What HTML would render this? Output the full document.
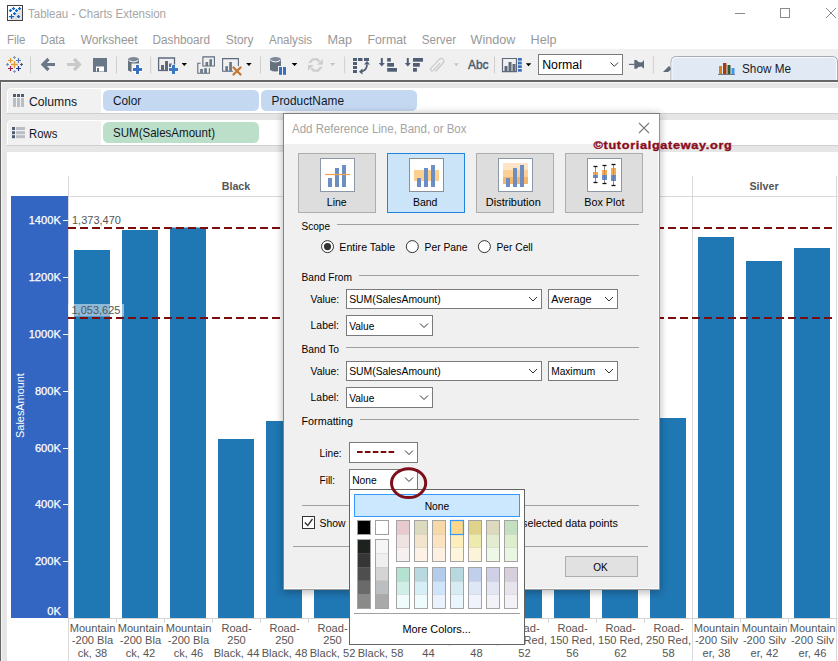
<!DOCTYPE html><html><head><meta charset="utf-8"><style>html,body{margin:0;padding:0;background:#fff;overflow:hidden}svg{display:block}text{font-family:"Liberation Sans",sans-serif}</style></head><body>
<svg width="838" height="661" viewBox="0 0 838 661">
<defs><linearGradient id="shL" x1="1" x2="0" y1="0" y2="0"><stop offset="0" stop-color="#000" stop-opacity="0.16"/><stop offset="1" stop-color="#000" stop-opacity="0"/></linearGradient><linearGradient id="shR" x1="0" x2="1" y1="0" y2="0"><stop offset="0" stop-color="#000" stop-opacity="0.16"/><stop offset="1" stop-color="#000" stop-opacity="0"/></linearGradient><linearGradient id="shB" x1="0" x2="0" y1="0" y2="1"><stop offset="0" stop-color="#000" stop-opacity="0.14"/><stop offset="1" stop-color="#000" stop-opacity="0"/></linearGradient><filter id="blur" x="-20%" y="-20%" width="140%" height="140%"><feGaussianBlur stdDeviation="4"/></filter><linearGradient id="bR" x1="0" x2="0" y1="0" y2="1"><stop offset="0" stop-color="#858585"/><stop offset="1" stop-color="#d8d8d8"/></linearGradient></defs>
<rect x="0" y="0" width="838" height="49" fill="#ffffff" />
<rect x="7" y="5" width="16" height="16" fill="#424242" />
<rect x="8" y="6" width="14" height="14" fill="#ffffff" />
<path d="M22 8 L22 20 L9 20 Z" fill="#e2e2e2"/>
<path d="M8.9 10.5H12.1M10.5 8.9V12.1" stroke="#1565c0" stroke-width="1.25" fill="none"/>
<path d="M11.9 8.5H15.1M13.5 6.9V10.1" stroke="#1565c0" stroke-width="1.25" fill="none"/>
<path d="M17.9 8.5H21.1M19.5 6.9V10.1" stroke="#1565c0" stroke-width="1.25" fill="none"/>
<path d="M14.9 10.5H18.1M16.5 8.9V12.1" stroke="#1565c0" stroke-width="1.25" fill="none"/>
<path d="M12.9 13.5H16.1M14.5 11.9V15.1" stroke="#1565c0" stroke-width="1.25" fill="none"/>
<path d="M8.9 16.5H14.1M11.5 13.9V19.1" stroke="#1565c0" stroke-width="1.25" fill="none"/>
<path d="M16.9 16.5H20.1M18.5 14.9V18.1" stroke="#1565c0" stroke-width="1.25" fill="none"/>
<text x="28" y="18" font-size="12.3" fill="#a6a6a6" textLength="138" lengthAdjust="spacingAndGlyphs" >Tableau - Charts Extension</text>
<line x1="735" y1="13.5" x2="745" y2="13.5" stroke="#8a8a8a" stroke-width="1" />
<rect x="780.5" y="8.5" width="9" height="9" fill="none" stroke="#8a8a8a" stroke-width="1" />
<path d="M826 8L836 18M836 8L826 18" stroke="#8a8a8a" stroke-width="1"/>
<text x="6.9" y="43.5" font-size="12.3" fill="#989898" textLength="18.6" lengthAdjust="spacingAndGlyphs" >File</text>
<text x="40.6" y="43.5" font-size="12.3" fill="#989898" textLength="24.4" lengthAdjust="spacingAndGlyphs" >Data</text>
<text x="80.7" y="43.5" font-size="12.3" fill="#989898" textLength="56.8" lengthAdjust="spacingAndGlyphs" >Worksheet</text>
<text x="152.5" y="43.5" font-size="12.3" fill="#989898" textLength="57.5" lengthAdjust="spacingAndGlyphs" >Dashboard</text>
<text x="225.7" y="43.5" font-size="12.3" fill="#989898" textLength="27.8" lengthAdjust="spacingAndGlyphs" >Story</text>
<text x="269.0" y="43.5" font-size="12.3" fill="#989898" textLength="43.0" lengthAdjust="spacingAndGlyphs" >Analysis</text>
<text x="327.5" y="43.5" font-size="12.3" fill="#989898" textLength="24.6" lengthAdjust="spacingAndGlyphs" >Map</text>
<text x="367.5" y="43.5" font-size="12.3" fill="#989898" textLength="38.9" lengthAdjust="spacingAndGlyphs" >Format</text>
<text x="421.8" y="43.5" font-size="12.3" fill="#989898" textLength="34.2" lengthAdjust="spacingAndGlyphs" >Server</text>
<text x="470.6" y="43.5" font-size="12.3" fill="#989898" textLength="44.9" lengthAdjust="spacingAndGlyphs" >Window</text>
<text x="530.6" y="43.5" font-size="12.3" fill="#989898" textLength="25.9" lengthAdjust="spacingAndGlyphs" >Help</text>
<rect x="0" y="49" width="838" height="31" fill="#f0f0f0" />
<rect x="0" y="80" width="838" height="2" fill="#666666" />
<path d="M11.0 64.5H18.0M14.5 61.0V68.0" stroke="#e5992f" stroke-width="1.3" fill="none"/>
<path d="M8.0 60.5H13.0M10.5 58.0V63.0" stroke="#e5992f" stroke-width="1.2" fill="none"/>
<path d="M16.0 60.5H21.0M18.5 58.0V63.0" stroke="#4f7bbf" stroke-width="1.2" fill="none"/>
<path d="M8.0 68.5H13.0M10.5 66.0V71.0" stroke="#a3224d" stroke-width="1.2" fill="none"/>
<path d="M16.0 68.5H21.0M18.5 66.0V71.0" stroke="#1e3c8f" stroke-width="1.2" fill="none"/>
<path d="M13.0 57.5H16.0M14.5 56.0V59.0" stroke="#8d9ba6" stroke-width="1.1" fill="none"/>
<path d="M6.0 64.5H9.0M7.5 63.0V66.0" stroke="#7b8bb8" stroke-width="1.1" fill="none"/>
<path d="M20.0 64.5H23.0M21.5 63.0V66.0" stroke="#4b5a88" stroke-width="1.1" fill="none"/>
<path d="M13.0 71.5H16.0M14.5 70.0V73.0" stroke="#8a9ac2" stroke-width="1.1" fill="none"/>
<line x1="30.5" y1="56.5" x2="30.5" y2="73.5" stroke="#cfcfcf" stroke-width="1" />
<path d="M43 64.5H55M48.5 59L43 64.5L48.5 70" stroke="#6b7889" stroke-width="3.2" fill="none" stroke-linejoin="miter"/>
<path d="M79.5 64.5H67M74 59L79.5 64.5L74 70" stroke="#c9c9c9" stroke-width="3.2" fill="none"/>
<rect x="93" y="58" width="14" height="14" fill="#687687" />
<rect x="96" y="66.5" width="8" height="5" fill="#ffffff" />
<rect x="97" y="68" width="2" height="4" fill="#687687" />
<line x1="116.5" y1="56.5" x2="116.5" y2="73.5" stroke="#cfcfcf" stroke-width="1" />
<path d="M128 59.5V70.5Q133.5 73.5 139 70.5V59.5Z" fill="#67727f"/>
<ellipse cx="133.5" cy="59.5" rx="5.5" ry="2.5" fill="#7d8998"/>
<path d="M128.6 60.3Q133.5 63.6 138.4 60.3" stroke="#ffffff" stroke-width="1" fill="none"/>
<rect x="131.5" y="63.5" width="11" height="11" fill="#f0f0f0" />
<path d="M133 69.5H142M137.5 65V74" stroke="#ffffff" stroke-width="5"/>
<path d="M133 69.5H142M137.5 65V74" stroke="#3b70c0" stroke-width="3"/>
<line x1="150.7" y1="56.5" x2="150.7" y2="73.5" stroke="#cfcfcf" stroke-width="1" />
<path d="M158.6 71V58H174.5V66" stroke="#5e6a7b" stroke-width="1.3" fill="none"/>
<path d="M158.6 70.5H168" stroke="#5e6a7b" stroke-width="1.3" fill="none"/>
<rect x="161" y="65" width="3" height="5" fill="#5e6a7b" />
<rect x="165" y="61" width="3" height="9" fill="#5e6a7b" />
<rect x="169" y="63.5" width="3" height="6.5" fill="#5e6a7b" />
<path d="M168.5 69.5H178.5M173.5 64.5V74.5" stroke="#f0f0f0" stroke-width="5"/>
<path d="M169 69.5H178M173.5 65V74" stroke="#3b78c6" stroke-width="3"/>
<path d="M181.6 63H187L184.3 66Z" fill="#000"/>
<path d="M202.9 56.9H214.4V66H202.9Z" stroke="#5e6a7b" stroke-width="1.1" fill="none"/>
<rect x="205.5" y="62" width="2.6" height="4" fill="#6a7888" />
<rect x="209.4" y="59.2" width="2.6" height="6.8" fill="#6a7888" />
<path d="M200.6 63.3H197.8V73.2H209.4V68.2" stroke="#5e6a7b" stroke-width="1.1" fill="none"/>
<rect x="200.2" y="69" width="2.7" height="4" fill="#6a7888" />
<rect x="204.2" y="68.2" width="2.7" height="4.8" fill="#6a7888" />
<path d="M233 71.2H222.6V58.6H238.4V66" stroke="#5e6a7b" stroke-width="1.1" fill="none"/>
<rect x="225.3" y="66.2" width="2.7" height="5" fill="#6a7888" />
<rect x="229.2" y="62" width="2.7" height="9.2" fill="#6a7888" />
<path d="M233.5 67.5L240.5 74.5M240.5 67.5L233.5 74.5" stroke="#c27a34" stroke-width="2.4" stroke-linecap="round"/>
<path d="M246.2 63H251.6L248.89999999999998 66Z" fill="#000"/>
<line x1="260.5" y1="56.5" x2="260.5" y2="73.5" stroke="#cfcfcf" stroke-width="1" />
<path d="M270 59.5V70.0Q275.5 73.0 281 70.0V59.5Z" fill="#67727f"/>
<ellipse cx="275.5" cy="59.5" rx="5.5" ry="2.5" fill="#7d8998"/>
<path d="M270.6 60.3Q275.5 63.6 280.4 60.3" stroke="#ffffff" stroke-width="1" fill="none"/>
<rect x="278" y="66" width="9" height="10" fill="#f0f0f0" />
<rect x="279" y="67" width="3" height="7.8" fill="#3b70c0" />
<rect x="283" y="67" width="3" height="7.8" fill="#3b70c0" />
<path d="M291.7 63H297.4L294.54999999999995 66Z" fill="#000"/>
<path d="M308 62.7L312.3 58.2H317.7L320.2 60.8L318.4 62.4L316.8 60.4H313.2L310.8 62.9Z M317 64.7H322.8V59Z" fill="#cdcdcd"/>
<path d="M322.8 67L318.5 71.8H313L310.6 69.2L312.3 67.6L313.9 69.6H317.5L320 66.8Z M308 65H313.8L308 70.8Z" fill="#cdcdcd"/>
<path d="M330 63H335.2L332.6 66Z" fill="#c4c4c4"/>
<line x1="344.7" y1="56.5" x2="344.7" y2="73.5" stroke="#cfcfcf" stroke-width="1" />
<rect x="353" y="58" width="4" height="3" fill="#4f5e74" />
<rect x="358" y="58" width="4.5" height="3" fill="#4f5e74" />
<rect x="364" y="58" width="5" height="3" fill="#4f5e74" />
<rect x="353" y="62" width="4" height="3" fill="#4f5e74" />
<rect x="353" y="66" width="4" height="3" fill="#4f5e74" />
<rect x="353" y="70" width="4" height="3" fill="#4f5e74" />
<path d="M361.5 71.5Q367 70 367 64.5" stroke="#4f5e74" stroke-width="1.8" fill="none"/>
<path d="M364 64.5L367 61L370 64.5Z M362.5 68.5L359 71.8L362.5 74.5Z" fill="#4f5e74"/>
<path d="M381.8 58V64" stroke="#4f5e74" stroke-width="2"/>
<path d="M378.8 63L384.8 63L381.8 66.5Z" fill="#4f5e74"/>
<rect x="387.2" y="58" width="3.6" height="3.6" fill="#4f5e74" />
<rect x="387.2" y="63" width="6.8" height="3.7" fill="#4f5e74" />
<rect x="387.2" y="68" width="9.8" height="3.7" fill="#4f5e74" />
<path d="M407.8 58V64" stroke="#4f5e74" stroke-width="2"/>
<path d="M404.8 63L410.8 63L407.8 66.5Z" fill="#4f5e74"/>
<rect x="413" y="58" width="10" height="3.7" fill="#4f5e74" />
<rect x="413" y="63" width="6.8" height="3.7" fill="#4f5e74" />
<rect x="413" y="68" width="3.9" height="3.7" fill="#4f5e74" />
<path d="M437 71.5L444.5 63A2.6 2.6 0 0 0 440.8 59.3L432.5 68.2A1.6 1.6 0 0 0 434.8 70.5L441.5 63.2" stroke="#c9c9c9" stroke-width="1.2" fill="none" transform="translate(-1.5,0)"/>
<path d="M453.8 63.2H458.8L456.3 66.2Z" fill="#c4c4c4"/>
<text x="468" y="68.8" font-size="12.6" fill="#4d5a70" textLength="20.5" lengthAdjust="spacingAndGlyphs" stroke="#4d5a70" stroke-width="0.45">Abc</text>
<line x1="494.5" y1="56.5" x2="494.5" y2="73.5" stroke="#cfcfcf" stroke-width="1" />
<path d="M502.5 71.6V58.5H516.5V71.6Z" stroke="#5e6a7b" stroke-width="1.2" fill="none"/>
<rect x="504.5" y="66" width="3" height="5.5" fill="#5e6a7b" />
<rect x="508.5" y="62" width="3" height="9.5" fill="#5e6a7b" />
<rect x="512.5" y="64" width="3" height="7.5" fill="#5e6a7b" />
<rect x="518" y="58" width="3.8" height="2.7" fill="#3b70c0" />
<rect x="518" y="61.7" width="3.8" height="2.7" fill="#3b70c0" />
<rect x="518" y="65.3" width="3.8" height="2.7" fill="#3b70c0" />
<rect x="518" y="69" width="3.8" height="2.7" fill="#3b70c0" />
<path d="M525.8 63.2H531.3L528.55 66.2Z" fill="#000"/>
<rect x="538.5" y="54.5" width="84" height="20" fill="#ffffff" stroke="#7a7a7a" stroke-width="1" />
<text x="542.2" y="69" font-size="12.3" fill="#000000" textLength="39.8" lengthAdjust="spacingAndGlyphs" >Normal</text>
<path d="M610.5 62.5L614.3 66.3L618.1 62.5" stroke="#333" stroke-width="1" fill="none"/>
<line x1="629" y1="64.4" x2="634.5" y2="64.4" stroke="#5e6a7b" stroke-width="1.2" />
<path d="M634.3 60H636.5Q638 62.5 641.5 62.5Q642.5 61.5 644 60V68.7Q642.5 67.3 641.5 66.5Q638 66.5 636.5 68.7H634.3Z" fill="#5e6a7b"/>
<line x1="653.4" y1="56.3" x2="653.4" y2="73.7" stroke="#cfcfcf" stroke-width="1" />
<path d="M663 72L669 66L672 69L668 72Z" fill="#5e6a7b"/>
<path d="M671 82V62Q671 56.5 676.5 56.5H832Q837.5 56.5 837.5 62V82Z" fill="#e1eaf4" stroke="#a4aab2" stroke-width="1"/>
<path d="M672 80V62.5Q672 57.5 677 57.5H831.5Q836.5 57.5 836.5 62.5V80" fill="none" stroke="#ffffff" stroke-width="1" stroke-opacity="0.8"/>
<rect x="719" y="66" width="3" height="8" fill="#d2821e" />
<rect x="723" y="63" width="3.5" height="11" fill="#a63a12" />
<rect x="727.5" y="65" width="3" height="9" fill="#2c5a30" />
<rect x="731.5" y="68" width="3" height="6" fill="#3d96f0" />
<line x1="718" y1="74.5" x2="735" y2="74.5" stroke="#6c7a88" stroke-width="1" />
<text x="742" y="72.8" font-size="12.8" fill="#1a1a2a" textLength="49" lengthAdjust="spacingAndGlyphs" >Show Me</text>
<rect x="0" y="80" width="838" height="2" fill="#666666" />
<rect x="0" y="82" width="838" height="579" fill="#e6e6e6" />
<rect x="0" y="82" width="1" height="579" fill="#666666" />
<rect x="1" y="82" width="838" height="1" fill="#f8f8f8" />
<rect x="1" y="83" width="1" height="578" fill="#f4f4f4" />
<path d="M7 113V93Q7 88 12 88H838V113Z" fill="#f1f1f1"/>
<rect x="101" y="89" width="737" height="24" fill="#ffffff" />
<path d="M7.5 113V93Q7.5 88.5 12 88.5H838" stroke="#ffffff" stroke-width="1" fill="none"/>
<rect x="7" y="113" width="831" height="1" fill="#d0d0d0" />
<rect x="13" y="94" width="3" height="3" fill="#4e5d70" />
<rect x="13" y="98" width="3" height="9" fill="#b9bdc4" />
<rect x="17" y="94" width="3" height="3" fill="#4e5d70" />
<rect x="17" y="98" width="3" height="9" fill="#b9bdc4" />
<rect x="21" y="94" width="3" height="3" fill="#4e5d70" />
<rect x="21" y="98" width="3" height="9" fill="#b9bdc4" />
<rect x="103" y="90" width="156" height="21" fill="#c5d8f1" rx="5.5" />
<rect x="261" y="90" width="156" height="21" fill="#c5d8f1" rx="5.5" />
<path d="M7 145V125Q7 120 12 120H838V145Z" fill="#f1f1f1"/>
<rect x="101" y="121" width="737" height="24" fill="#ffffff" />
<path d="M7.5 145V125Q7.5 120.5 12 120.5H838" stroke="#ffffff" stroke-width="1" fill="none"/>
<rect x="7" y="145" width="831" height="1" fill="#d0d0d0" />
<rect x="12" y="127" width="3" height="3" fill="#4e5d70" />
<rect x="16" y="127" width="9" height="3" fill="#b9bdc4" />
<rect x="12" y="131.2" width="3" height="3" fill="#4e5d70" />
<rect x="16" y="131.2" width="9" height="3" fill="#b9bdc4" />
<rect x="12" y="135.2" width="3" height="3" fill="#4e5d70" />
<rect x="16" y="135.2" width="9" height="3" fill="#b9bdc4" />
<rect x="103" y="122" width="156" height="21" fill="#bcdfc9" rx="5.5" />
<text x="29" y="105.5" font-size="12.8" fill="#101828" textLength="48" lengthAdjust="spacingAndGlyphs" >Columns</text>
<text x="29" y="137.7" font-size="12.8" fill="#101828" textLength="28.3" lengthAdjust="spacingAndGlyphs" >Rows</text>
<text x="113" y="105" font-size="12.8" fill="#101828" textLength="28.2" lengthAdjust="spacingAndGlyphs" >Color</text>
<text x="271.5" y="105" font-size="12.8" fill="#101828" textLength="72.5" lengthAdjust="spacingAndGlyphs" >ProductName</text>
<text x="113" y="137" font-size="12.8" fill="#101828" textLength="102" lengthAdjust="spacingAndGlyphs" >SUM(SalesAmount)</text>
<rect x="7" y="152" width="831" height="509" fill="#ffffff" />
<line x1="68.5" y1="176" x2="68.5" y2="661" stroke="#d9d9d9" stroke-width="1" />
<line x1="692.5" y1="176" x2="692.5" y2="661" stroke="#d9d9d9" stroke-width="1" />
<line x1="836.5" y1="176" x2="836.5" y2="661" stroke="#d9d9d9" stroke-width="1" />
<line x1="68" y1="196.5" x2="838" y2="196.5" stroke="#d9d9d9" stroke-width="1" />
<text x="236" y="189.8" font-size="10.7" fill="#555555" font-weight="bold" text-anchor="middle" >Black</text>
<text x="548" y="189.8" font-size="10.7" fill="#555555" font-weight="bold" text-anchor="middle" >Red</text>
<text x="764" y="189.8" font-size="10.7" fill="#555555" font-weight="bold" text-anchor="middle" >Silver</text>
<rect x="11" y="196" width="57" height="422" fill="#3366c2" />
<text x="60.8" y="614.5" font-size="11.1" fill="#ffffff" text-anchor="end" stroke="#ffffff" stroke-width="0.25">0K</text>
<line x1="63" y1="561.5" x2="68" y2="561.5" stroke="#f4f6fc" stroke-width="1" />
<text x="60.8" y="564.6" font-size="11.1" fill="#ffffff" text-anchor="end" stroke="#ffffff" stroke-width="0.25">200K</text>
<line x1="63" y1="504.5" x2="68" y2="504.5" stroke="#f4f6fc" stroke-width="1" />
<text x="60.8" y="507.6" font-size="11.1" fill="#ffffff" text-anchor="end" stroke="#ffffff" stroke-width="0.25">400K</text>
<line x1="63" y1="448.5" x2="68" y2="448.5" stroke="#f4f6fc" stroke-width="1" />
<text x="60.8" y="451.6" font-size="11.1" fill="#ffffff" text-anchor="end" stroke="#ffffff" stroke-width="0.25">600K</text>
<line x1="63" y1="391.5" x2="68" y2="391.5" stroke="#f4f6fc" stroke-width="1" />
<text x="60.8" y="394.6" font-size="11.1" fill="#ffffff" text-anchor="end" stroke="#ffffff" stroke-width="0.25">800K</text>
<line x1="63" y1="334.5" x2="68" y2="334.5" stroke="#f4f6fc" stroke-width="1" />
<text x="60.8" y="337.6" font-size="11.1" fill="#ffffff" text-anchor="end" stroke="#ffffff" stroke-width="0.25">1000K</text>
<line x1="63" y1="277.5" x2="68" y2="277.5" stroke="#f4f6fc" stroke-width="1" />
<text x="60.8" y="280.6" font-size="11.1" fill="#ffffff" text-anchor="end" stroke="#ffffff" stroke-width="0.25">1200K</text>
<line x1="63" y1="220.5" x2="68" y2="220.5" stroke="#f4f6fc" stroke-width="1" />
<text x="60.8" y="223.6" font-size="11.1" fill="#ffffff" text-anchor="end" stroke="#ffffff" stroke-width="0.25">1400K</text>
<text x="0" y="0" font-size="10.9" fill="#ffffff" text-anchor="middle" transform="translate(24.3,405.5) rotate(-90)">SalesAmount</text>
<rect x="74" y="250" width="36" height="368" fill="#1f77b4" />
<rect x="122" y="230" width="36" height="388" fill="#1f77b4" />
<rect x="170" y="227.5" width="36" height="390.5" fill="#1f77b4" />
<rect x="218" y="439" width="36" height="179" fill="#1f77b4" />
<rect x="266" y="421" width="36" height="197" fill="#1f77b4" />
<rect x="314" y="380" width="36" height="238" fill="#1f77b4" />
<rect x="362" y="400" width="36" height="218" fill="#1f77b4" />
<rect x="410" y="300" width="36" height="318" fill="#1f77b4" />
<rect x="458" y="320" width="36" height="298" fill="#1f77b4" />
<rect x="506" y="350" width="36" height="268" fill="#1f77b4" />
<rect x="554" y="360" width="36" height="258" fill="#1f77b4" />
<rect x="602" y="330" width="36" height="288" fill="#1f77b4" />
<rect x="650" y="418" width="36" height="200" fill="#1f77b4" />
<rect x="698" y="237" width="36" height="381" fill="#1f77b4" />
<rect x="746" y="261" width="36" height="357" fill="#1f77b4" />
<rect x="794" y="248" width="36" height="370" fill="#1f77b4" />
<line x1="68" y1="618.5" x2="838" y2="618.5" stroke="#d4d4d4" stroke-width="1" />
<line x1="116.5" y1="619" x2="116.5" y2="623" stroke="#d4d4d4" stroke-width="1" />
<line x1="164.5" y1="619" x2="164.5" y2="623" stroke="#d4d4d4" stroke-width="1" />
<line x1="212.5" y1="619" x2="212.5" y2="623" stroke="#d4d4d4" stroke-width="1" />
<line x1="260.5" y1="619" x2="260.5" y2="623" stroke="#d4d4d4" stroke-width="1" />
<line x1="308.5" y1="619" x2="308.5" y2="623" stroke="#d4d4d4" stroke-width="1" />
<line x1="356.5" y1="619" x2="356.5" y2="623" stroke="#d4d4d4" stroke-width="1" />
<line x1="404.5" y1="619" x2="404.5" y2="623" stroke="#d4d4d4" stroke-width="1" />
<line x1="452.5" y1="619" x2="452.5" y2="623" stroke="#d4d4d4" stroke-width="1" />
<line x1="500.5" y1="619" x2="500.5" y2="623" stroke="#d4d4d4" stroke-width="1" />
<line x1="548.5" y1="619" x2="548.5" y2="623" stroke="#d4d4d4" stroke-width="1" />
<line x1="596.5" y1="619" x2="596.5" y2="623" stroke="#d4d4d4" stroke-width="1" />
<line x1="644.5" y1="619" x2="644.5" y2="623" stroke="#d4d4d4" stroke-width="1" />
<line x1="692.5" y1="619" x2="692.5" y2="623" stroke="#d4d4d4" stroke-width="1" />
<line x1="740.5" y1="619" x2="740.5" y2="623" stroke="#d4d4d4" stroke-width="1" />
<line x1="788.5" y1="619" x2="788.5" y2="623" stroke="#d4d4d4" stroke-width="1" />
<line x1="836.5" y1="619" x2="836.5" y2="623" stroke="#d4d4d4" stroke-width="1" />
<text x="92.5" y="631.8" font-size="11.1" fill="#555555" text-anchor="middle" >Mountain</text>
<text x="92.5" y="644.3" font-size="11.1" fill="#555555" text-anchor="middle" >-200 Bla</text>
<text x="92.5" y="656.5" font-size="11.1" fill="#555555" text-anchor="middle" >ck, 38</text>
<text x="140.5" y="631.8" font-size="11.1" fill="#555555" text-anchor="middle" >Mountain</text>
<text x="140.5" y="644.3" font-size="11.1" fill="#555555" text-anchor="middle" >-200 Bla</text>
<text x="140.5" y="656.5" font-size="11.1" fill="#555555" text-anchor="middle" >ck, 42</text>
<text x="188.5" y="631.8" font-size="11.1" fill="#555555" text-anchor="middle" >Mountain</text>
<text x="188.5" y="644.3" font-size="11.1" fill="#555555" text-anchor="middle" >-200 Bla</text>
<text x="188.5" y="656.5" font-size="11.1" fill="#555555" text-anchor="middle" >ck, 46</text>
<text x="236.5" y="631.8" font-size="11.1" fill="#555555" text-anchor="middle" >Road-</text>
<text x="236.5" y="644.3" font-size="11.1" fill="#555555" text-anchor="middle" >250</text>
<text x="236.5" y="656.5" font-size="11.1" fill="#555555" text-anchor="middle" >Black, 44</text>
<text x="284.5" y="631.8" font-size="11.1" fill="#555555" text-anchor="middle" >Road-</text>
<text x="284.5" y="644.3" font-size="11.1" fill="#555555" text-anchor="middle" >250</text>
<text x="284.5" y="656.5" font-size="11.1" fill="#555555" text-anchor="middle" >Black, 48</text>
<text x="332.5" y="631.8" font-size="11.1" fill="#555555" text-anchor="middle" >Road-</text>
<text x="332.5" y="644.3" font-size="11.1" fill="#555555" text-anchor="middle" >250</text>
<text x="332.5" y="656.5" font-size="11.1" fill="#555555" text-anchor="middle" >Black, 52</text>
<text x="380.5" y="631.8" font-size="11.1" fill="#555555" text-anchor="middle" >Road-</text>
<text x="380.5" y="644.3" font-size="11.1" fill="#555555" text-anchor="middle" >250</text>
<text x="380.5" y="656.5" font-size="11.1" fill="#555555" text-anchor="middle" >Black, 58</text>
<text x="428.5" y="631.8" font-size="11.1" fill="#555555" text-anchor="middle" >Road-</text>
<text x="428.5" y="644.3" font-size="11.1" fill="#555555" text-anchor="middle" >150 Red,</text>
<text x="428.5" y="656.5" font-size="11.1" fill="#555555" text-anchor="middle" >44</text>
<text x="476.5" y="631.8" font-size="11.1" fill="#555555" text-anchor="middle" >Road-</text>
<text x="476.5" y="644.3" font-size="11.1" fill="#555555" text-anchor="middle" >150 Red,</text>
<text x="476.5" y="656.5" font-size="11.1" fill="#555555" text-anchor="middle" >48</text>
<text x="524.5" y="631.8" font-size="11.1" fill="#555555" text-anchor="middle" >Road-</text>
<text x="524.5" y="644.3" font-size="11.1" fill="#555555" text-anchor="middle" >150 Red,</text>
<text x="524.5" y="656.5" font-size="11.1" fill="#555555" text-anchor="middle" >52</text>
<text x="572.5" y="631.8" font-size="11.1" fill="#555555" text-anchor="middle" >Road-</text>
<text x="572.5" y="644.3" font-size="11.1" fill="#555555" text-anchor="middle" >150 Red,</text>
<text x="572.5" y="656.5" font-size="11.1" fill="#555555" text-anchor="middle" >56</text>
<text x="620.5" y="631.8" font-size="11.1" fill="#555555" text-anchor="middle" >Road-</text>
<text x="620.5" y="644.3" font-size="11.1" fill="#555555" text-anchor="middle" >150 Red,</text>
<text x="620.5" y="656.5" font-size="11.1" fill="#555555" text-anchor="middle" >62</text>
<text x="668.5" y="631.8" font-size="11.1" fill="#555555" text-anchor="middle" >Road-</text>
<text x="668.5" y="644.3" font-size="11.1" fill="#555555" text-anchor="middle" >250 Red,</text>
<text x="668.5" y="656.5" font-size="11.1" fill="#555555" text-anchor="middle" >58</text>
<text x="716.5" y="631.8" font-size="11.1" fill="#555555" text-anchor="middle" >Mountain</text>
<text x="716.5" y="644.3" font-size="11.1" fill="#555555" text-anchor="middle" >-200 Silv</text>
<text x="716.5" y="656.5" font-size="11.1" fill="#555555" text-anchor="middle" >er, 38</text>
<text x="764.5" y="631.8" font-size="11.1" fill="#555555" text-anchor="middle" >Mountain</text>
<text x="764.5" y="644.3" font-size="11.1" fill="#555555" text-anchor="middle" >-200 Silv</text>
<text x="764.5" y="656.5" font-size="11.1" fill="#555555" text-anchor="middle" >er, 42</text>
<text x="812.5" y="631.8" font-size="11.1" fill="#555555" text-anchor="middle" >Mountain</text>
<text x="812.5" y="644.3" font-size="11.1" fill="#555555" text-anchor="middle" >-200 Silv</text>
<text x="812.5" y="656.5" font-size="11.1" fill="#555555" text-anchor="middle" >er, 46</text>
<line x1="68" y1="228" x2="833" y2="228" stroke="#7b0c0c" stroke-width="2.2" stroke-dasharray="8 4"/>
<line x1="68" y1="318" x2="833" y2="318" stroke="#7b0c0c" stroke-width="2.2" stroke-dasharray="8 4"/>
<text x="72" y="223.9" font-size="11" fill="#555555" >1,373,470</text>
<rect x="68" y="304" width="56" height="12.5" fill="#ffffff" fill-opacity="0.5"/>
<text x="71.5" y="313.6" font-size="11" fill="#555555" >1,053,625</text>
<rect x="283" y="114" width="377" height="478" fill="#000" opacity="0.30" filter="url(#blur)"/>
<rect x="283" y="113" width="377" height="477" fill="#f0f0f0" />
<rect x="284" y="114" width="375" height="30" fill="#ffffff" />
<rect x="658" y="144" width="1" height="444" fill="#fafafa" />
<rect x="284" y="588" width="375" height="1" fill="#fafafa" />
<rect x="283" y="113" width="377" height="1" fill="#000" fill-opacity="0.48"/>
<rect x="283" y="114" width="1" height="476" fill="#000" fill-opacity="0.45"/>
<rect x="659" y="114" width="1" height="476" fill="#000" fill-opacity="0.38"/>
<rect x="284" y="589" width="375" height="1" fill="#000" fill-opacity="0.34"/>
<text x="292" y="133" font-size="12.3" fill="#a4a4a4" textLength="174.5" lengthAdjust="spacingAndGlyphs" >Add Reference Line, Band, or Box</text>
<path d="M639 123L649 133M649 123L639 133" stroke="#7a7a7a" stroke-width="1.1"/>
<rect x="298.5" y="153.5" width="77" height="59" fill="#dddddd" stroke="#adadad" stroke-width="1" />
<rect x="320.5" y="158.5" width="34" height="33" fill="#ffffff" stroke="#8a98a8" stroke-width="1" />
<rect x="328" y="178" width="4" height="9" fill="#6b8fc2" />
<rect x="335" y="168" width="4" height="19" fill="#6b8fc2" />
<rect x="342" y="165" width="4" height="22" fill="#6b8fc2" />
<line x1="325" y1="174.5" x2="350" y2="174.5" stroke="#f2a04a" stroke-width="1.2" />
<text x="336.75" y="205.6" font-size="11.8" fill="#000000" text-anchor="middle" textLength="19.9" lengthAdjust="spacingAndGlyphs" >Line</text>
<rect x="387.5" y="153.5" width="77" height="59" fill="#cce4f7" stroke="#1e84e0" stroke-width="1" />
<rect x="409.5" y="158.5" width="34" height="33" fill="#ffffff" stroke="#8b8f96" stroke-width="1" />
<rect x="414" y="170" width="25" height="11" fill="#fdd090" />
<rect x="417" y="178" width="4" height="9" fill="#6b8fc2" />
<rect x="424" y="168" width="4" height="19" fill="#6b8fc2" />
<rect x="431" y="165" width="4" height="22" fill="#6b8fc2" />
<text x="425.2" y="205.6" font-size="11.8" fill="#000000" text-anchor="middle" textLength="24.4" lengthAdjust="spacingAndGlyphs" >Band</text>
<rect x="476.5" y="153.5" width="77" height="59" fill="#dddddd" stroke="#adadad" stroke-width="1" />
<rect x="498.5" y="158.5" width="34" height="33" fill="#ffffff" stroke="#8a98a8" stroke-width="1" />
<rect x="503" y="163" width="25" height="7" fill="#fde4c6" />
<rect x="503" y="170" width="25" height="7" fill="#fccf97" />
<rect x="503" y="177" width="25" height="7" fill="#f6b46c" />
<rect x="506" y="178" width="4" height="9" fill="#6b8fc2" />
<rect x="513" y="168" width="4" height="19" fill="#6b8fc2" />
<rect x="520" y="165" width="4" height="22" fill="#6b8fc2" />
<text x="513.3" y="205.6" font-size="11.8" fill="#000000" text-anchor="middle" textLength="55.0" lengthAdjust="spacingAndGlyphs" >Distribution</text>
<rect x="565.5" y="153.5" width="77" height="59" fill="#dddddd" stroke="#adadad" stroke-width="1" />
<rect x="587.5" y="158.5" width="34" height="33" fill="#ffffff" stroke="#8a98a8" stroke-width="1" />
<line x1="595.5" y1="166.5" x2="595.5" y2="182.5" stroke="#8a8a8a" stroke-width="1" />
<rect x="593" y="172" width="5" height="3" fill="#f0aa58" />
<rect x="593" y="175" width="5" height="3" fill="#6b8fc2" />
<line x1="595.5" y1="172" x2="595.5" y2="178" stroke="#000000" stroke-width="0.6" stroke-opacity="0.25"/>
<line x1="593.5" y1="166.5" x2="597.5" y2="166.5" stroke="#111" stroke-width="1.3" />
<line x1="593.5" y1="182.5" x2="597.5" y2="182.5" stroke="#111" stroke-width="1.3" />
<line x1="604.5" y1="165.5" x2="604.5" y2="183.5" stroke="#8a8a8a" stroke-width="1" />
<rect x="602" y="170" width="5" height="5" fill="#f0aa58" />
<rect x="602" y="175" width="5" height="5" fill="#6b8fc2" />
<line x1="604.5" y1="170" x2="604.5" y2="180" stroke="#000000" stroke-width="0.6" stroke-opacity="0.25"/>
<line x1="602.5" y1="165.5" x2="606.5" y2="165.5" stroke="#111" stroke-width="1.3" />
<line x1="602.5" y1="183.5" x2="606.5" y2="183.5" stroke="#111" stroke-width="1.3" />
<line x1="613.5" y1="164.5" x2="613.5" y2="185.5" stroke="#8a8a8a" stroke-width="1" />
<rect x="611" y="168" width="5" height="7" fill="#f0aa58" />
<rect x="611" y="175" width="5" height="6" fill="#6b8fc2" />
<line x1="613.5" y1="168" x2="613.5" y2="181" stroke="#000000" stroke-width="0.6" stroke-opacity="0.25"/>
<line x1="611.5" y1="164.5" x2="615.5" y2="164.5" stroke="#111" stroke-width="1.3" />
<line x1="611.5" y1="185.5" x2="615.5" y2="185.5" stroke="#111" stroke-width="1.3" />
<text x="604.3" y="205.6" font-size="11.8" fill="#000000" text-anchor="middle" textLength="40.2" lengthAdjust="spacingAndGlyphs" >Box Plot</text>
<text x="301.5" y="230" font-size="11.8" fill="#000000" textLength="28.5" lengthAdjust="spacingAndGlyphs" >Scope</text>
<line x1="337" y1="224.5" x2="639" y2="224.5" stroke="#a0a0a0" stroke-width="1" />
<circle cx="327.5" cy="246.6" r="6" fill="#ffffff" stroke="#333333" stroke-width="1"/>
<circle cx="327.5" cy="246.6" r="3.6" fill="#333333"/>
<text x="339.3" y="250.8" font-size="11.8" fill="#000000" textLength="55.9" lengthAdjust="spacingAndGlyphs" >Entire Table</text>
<circle cx="412.3" cy="246.6" r="6" fill="#ffffff" stroke="#333333" stroke-width="1"/>
<text x="424.5" y="250.8" font-size="11.8" fill="#000000" textLength="43.1" lengthAdjust="spacingAndGlyphs" >Per Pane</text>
<circle cx="484.4" cy="246.6" r="6" fill="#ffffff" stroke="#333333" stroke-width="1"/>
<text x="496.5" y="250.8" font-size="11.8" fill="#000000" textLength="36.4" lengthAdjust="spacingAndGlyphs" >Per Cell</text>
<text x="301.5" y="281" font-size="11.8" fill="#000000" textLength="50.5" lengthAdjust="spacingAndGlyphs" >Band From</text>
<line x1="359" y1="275.5" x2="639" y2="275.5" stroke="#a0a0a0" stroke-width="1" />
<text x="310.6" y="303.2" font-size="11.8" fill="#000000" textLength="28.6" lengthAdjust="spacingAndGlyphs" >Value:</text>
<rect x="346.5" y="289.5" width="195" height="19" fill="#ffffff" stroke="#7a7a7a" stroke-width="1" />
<text x="349.2" y="303" font-size="11.8" fill="#000000" textLength="91.5" lengthAdjust="spacingAndGlyphs" >SUM(SalesAmount)</text>
<path d="M529 297.0L533 301.0L537 297.0" stroke="#333" stroke-width="1" fill="none"/>
<rect x="548.5" y="289.5" width="69" height="19" fill="#ffffff" stroke="#7a7a7a" stroke-width="1" />
<text x="551.2" y="303" font-size="11.8" fill="#000000" textLength="40.5" lengthAdjust="spacingAndGlyphs" >Average</text>
<path d="M605 297.0L609 301.0L613 297.0" stroke="#333" stroke-width="1" fill="none"/>
<text x="310.6" y="329.2" font-size="11.8" fill="#000000" textLength="28.3" lengthAdjust="spacingAndGlyphs" >Label:</text>
<rect x="346.5" y="315.5" width="86" height="20" fill="#ffffff" stroke="#7a7a7a" stroke-width="1" />
<text x="349.2" y="330" font-size="11.8" fill="#000000" textLength="25.2" lengthAdjust="spacingAndGlyphs" >Value</text>
<path d="M420 323.5L424 327.5L428 323.5" stroke="#333" stroke-width="1" fill="none"/>
<text x="301.5" y="352.9" font-size="11.8" fill="#000000" textLength="37.5" lengthAdjust="spacingAndGlyphs" >Band To</text>
<line x1="346" y1="347.5" x2="639" y2="347.5" stroke="#a0a0a0" stroke-width="1" />
<text x="310.6" y="375.2" font-size="11.8" fill="#000000" textLength="28.6" lengthAdjust="spacingAndGlyphs" >Value:</text>
<rect x="346.5" y="361.5" width="195" height="19" fill="#ffffff" stroke="#7a7a7a" stroke-width="1" />
<text x="349.2" y="375" font-size="11.8" fill="#000000" textLength="91.5" lengthAdjust="spacingAndGlyphs" >SUM(SalesAmount)</text>
<path d="M529 369.0L533 373.0L537 369.0" stroke="#333" stroke-width="1" fill="none"/>
<rect x="548.5" y="361.5" width="69" height="19" fill="#ffffff" stroke="#7a7a7a" stroke-width="1" />
<text x="551.2" y="375" font-size="11.8" fill="#000000" textLength="44" lengthAdjust="spacingAndGlyphs" >Maximum</text>
<path d="M605 369.0L609 373.0L613 369.0" stroke="#333" stroke-width="1" fill="none"/>
<text x="310.6" y="401.2" font-size="11.8" fill="#000000" textLength="28.3" lengthAdjust="spacingAndGlyphs" >Label:</text>
<rect x="346.5" y="387.5" width="86" height="20" fill="#ffffff" stroke="#7a7a7a" stroke-width="1" />
<text x="349.2" y="402" font-size="11.8" fill="#000000" textLength="25.2" lengthAdjust="spacingAndGlyphs" >Value</text>
<path d="M420 395.5L424 399.5L428 395.5" stroke="#333" stroke-width="1" fill="none"/>
<text x="301.5" y="425" font-size="11.8" fill="#000000" textLength="51.5" lengthAdjust="spacingAndGlyphs" >Formatting</text>
<line x1="360" y1="419.5" x2="639" y2="419.5" stroke="#a0a0a0" stroke-width="1" />
<text x="319.6" y="457" font-size="11.8" fill="#000000" textLength="22" lengthAdjust="spacingAndGlyphs" >Line:</text>
<rect x="349.5" y="442.5" width="68" height="20" fill="#ffffff" stroke="#7a7a7a" stroke-width="1" />
<path d="M405 450.5L409 454.5L413 450.5" stroke="#333" stroke-width="1" fill="none"/>
<line x1="357" y1="452" x2="394.4" y2="452" stroke="#7b0c0c" stroke-width="2.2" stroke-dasharray="5.6 2.3"/>
<text x="319.6" y="483.7" font-size="11.8" fill="#000000" textLength="15.5" lengthAdjust="spacingAndGlyphs" >Fill:</text>
<rect x="349.5" y="469.5" width="68" height="20" fill="#ffffff" stroke="#7a7a7a" stroke-width="1" />
<text x="352.2" y="484" font-size="11.8" fill="#000000" textLength="24.6" lengthAdjust="spacingAndGlyphs" >None</text>
<path d="M405 477.5L409 481.5L413 477.5" stroke="#333" stroke-width="1" fill="none"/>
<line x1="302" y1="505.5" x2="639" y2="505.5" stroke="#a0a0a0" stroke-width="1" />
<rect x="302.5" y="516.5" width="12" height="12" fill="#ffffff" stroke="#333333" stroke-width="1" />
<path d="M304.8 522.5L307.8 525.5L312.5 519" stroke="#333" stroke-width="1.3" fill="none"/>
<text x="319.5" y="526.8" font-size="11.8" fill="#000000" textLength="26" lengthAdjust="spacingAndGlyphs" >Show</text>
<text x="348.5" y="526.8" font-size="11.8" fill="#000000" >recalculated band for</text>
<text x="618" y="526.8" font-size="11.8" fill="#000000" text-anchor="end" textLength="96" lengthAdjust="spacingAndGlyphs" >selected data points</text>
<line x1="293" y1="546.5" x2="648" y2="546.5" stroke="#a0a0a0" stroke-width="1" />
<rect x="565.5" y="556.5" width="72" height="20" fill="#e1e1e1" stroke="#adadad" stroke-width="1" />
<text x="600.5" y="570.7" font-size="11.8" fill="#000000" text-anchor="middle" textLength="14.5" lengthAdjust="spacingAndGlyphs" >OK</text>
<rect x="349" y="489" width="176" height="156" fill="#ffffff" />
<rect x="349.5" y="489.5" width="175" height="155" fill="none" stroke="#646464" stroke-width="1" />
<rect x="354.5" y="494.5" width="165" height="22" fill="#cce8ff" stroke="#3399ff" stroke-width="1" />
<text x="437" y="510" font-size="11.8" fill="#000000" text-anchor="middle" textLength="24.6" lengthAdjust="spacingAndGlyphs" >None</text>
<rect x="357" y="520" width="14" height="15" fill="#a0a0a0" />
<rect x="358" y="521" width="12" height="13" fill="#000000" />
<rect x="375" y="520" width="14" height="15" fill="#a0a0a0" />
<rect x="376" y="521" width="12" height="13" fill="#ffffff" />
<rect x="357" y="539" width="14" height="70" fill="#a4a4a4" />
<rect x="358" y="540.0" width="12" height="13.62" fill="#1d221f" />
<rect x="358" y="553.6" width="12" height="13.62" fill="#373636" />
<rect x="358" y="567.2" width="12" height="13.62" fill="#4f4e4f" />
<rect x="358" y="580.8" width="12" height="13.62" fill="#6a6a6a" />
<rect x="358" y="594.4" width="12" height="13.62" fill="#8a8a88" />
<rect x="375" y="539" width="14" height="70" fill="#a4a4a4" />
<rect x="376" y="540.0" width="12" height="13.62" fill="#f6f6f6" />
<rect x="376" y="553.6" width="12" height="13.62" fill="#efefef" />
<rect x="376" y="567.2" width="12" height="13.62" fill="#d4d4d4" />
<rect x="376" y="580.8" width="12" height="13.62" fill="#bcbfc1" />
<rect x="376" y="594.4" width="12" height="13.62" fill="#a9a9a9" />
<rect x="396" y="520" width="14" height="42" fill="#a4a4a4" />
<rect x="397" y="521.0" width="12" height="13.353333333333333" fill="#e8c9cd" />
<rect x="397" y="534.3333333333334" width="12" height="13.353333333333333" fill="#efe3e2" />
<rect x="397" y="547.6666666666666" width="12" height="13.353333333333333" fill="#f7f0f0" />
<rect x="396" y="567" width="14" height="42" fill="#a4a4a4" />
<rect x="397" y="568.0" width="12" height="13.353333333333333" fill="#b3e2d0" />
<rect x="397" y="581.3333333333334" width="12" height="13.353333333333333" fill="#cfeee6" />
<rect x="397" y="594.6666666666666" width="12" height="13.353333333333333" fill="#effcfb" />
<rect x="414" y="520" width="14" height="42" fill="#a4a4a4" />
<rect x="415" y="521.0" width="12" height="13.353333333333333" fill="#dbd9be" />
<rect x="415" y="534.3333333333334" width="12" height="13.353333333333333" fill="#f3e5cd" />
<rect x="415" y="547.6666666666666" width="12" height="13.353333333333333" fill="#fdf2e6" />
<rect x="414" y="567" width="14" height="42" fill="#a4a4a4" />
<rect x="415" y="568.0" width="12" height="13.353333333333333" fill="#b8d9e0" />
<rect x="415" y="581.3333333333334" width="12" height="13.353333333333333" fill="#d6eef5" />
<rect x="415" y="594.6666666666666" width="12" height="13.353333333333333" fill="#effcfd" />
<rect x="432" y="520" width="14" height="42" fill="#a4a4a4" />
<rect x="433" y="521.0" width="12" height="13.353333333333333" fill="#f7d9a9" />
<rect x="433" y="534.3333333333334" width="12" height="13.353333333333333" fill="#fde2c1" />
<rect x="433" y="547.6666666666666" width="12" height="13.353333333333333" fill="#fdf0e3" />
<rect x="432" y="567" width="14" height="42" fill="#a4a4a4" />
<rect x="433" y="568.0" width="12" height="13.353333333333333" fill="#b4cbeb" />
<rect x="433" y="581.3333333333334" width="12" height="13.353333333333333" fill="#d1e5fa" />
<rect x="433" y="594.6666666666666" width="12" height="13.353333333333333" fill="#eaf3fd" />
<rect x="450" y="520" width="14" height="42" fill="#a4a4a4" />
<rect x="451" y="521.0" width="12" height="13.353333333333333" fill="#fdd78a" />
<rect x="451" y="534.3333333333334" width="12" height="13.353333333333333" fill="#fdeebb" />
<rect x="451" y="547.6666666666666" width="12" height="13.353333333333333" fill="#fdf6dc" />
<rect x="450" y="567" width="14" height="42" fill="#a4a4a4" />
<rect x="451" y="568.0" width="12" height="13.353333333333333" fill="#b8d8df" />
<rect x="451" y="581.3333333333334" width="12" height="13.353333333333333" fill="#d6ecf2" />
<rect x="451" y="594.6666666666666" width="12" height="13.353333333333333" fill="#eaf6fb" />
<rect x="468" y="520" width="14" height="42" fill="#a4a4a4" />
<rect x="469" y="521.0" width="12" height="13.353333333333333" fill="#dfd38a" />
<rect x="469" y="534.3333333333334" width="12" height="13.353333333333333" fill="#ecebad" />
<rect x="469" y="547.6666666666666" width="12" height="13.353333333333333" fill="#fbf4d9" />
<rect x="468" y="567" width="14" height="42" fill="#a4a4a4" />
<rect x="469" y="568.0" width="12" height="13.353333333333333" fill="#c0d0ec" />
<rect x="469" y="581.3333333333334" width="12" height="13.353333333333333" fill="#dde7f6" />
<rect x="469" y="594.6666666666666" width="12" height="13.353333333333333" fill="#eff3fb" />
<rect x="486" y="520" width="14" height="42" fill="#a4a4a4" />
<rect x="487" y="521.0" width="12" height="13.353333333333333" fill="#dcd9bf" />
<rect x="487" y="534.3333333333334" width="12" height="13.353333333333333" fill="#e3ecd0" />
<rect x="487" y="547.6666666666666" width="12" height="13.353333333333333" fill="#eef8e7" />
<rect x="486" y="567" width="14" height="42" fill="#a4a4a4" />
<rect x="487" y="568.0" width="12" height="13.353333333333333" fill="#cfcfe8" />
<rect x="487" y="581.3333333333334" width="12" height="13.353333333333333" fill="#e2e6f3" />
<rect x="487" y="594.6666666666666" width="12" height="13.353333333333333" fill="#f2f2f8" />
<rect x="504" y="520" width="14" height="42" fill="#a4a4a4" />
<rect x="505" y="521.0" width="12" height="13.353333333333333" fill="#c5e0c0" />
<rect x="505" y="534.3333333333334" width="12" height="13.353333333333333" fill="#ddeecd" />
<rect x="505" y="547.6666666666666" width="12" height="13.353333333333333" fill="#e8f6e2" />
<rect x="504" y="567" width="14" height="42" fill="#a4a4a4" />
<rect x="505" y="568.0" width="12" height="13.353333333333333" fill="#d7d0dc" />
<rect x="505" y="581.3333333333334" width="12" height="13.353333333333333" fill="#e8e4ee" />
<rect x="505" y="594.6666666666666" width="12" height="13.353333333333333" fill="#f5f2f7" />
<rect x="450.5" y="520.5" width="13" height="14" fill="none" stroke="#3399ff" stroke-width="1.2" />
<line x1="354" y1="613.5" x2="520" y2="613.5" stroke="#a0a0a0" stroke-width="1" />
<text x="402.4" y="633.4" font-size="11.8" fill="#000000" textLength="68.5" lengthAdjust="spacingAndGlyphs" >More Colors...</text>
<ellipse cx="408.6" cy="483.1" rx="17.1" ry="14.4" fill="none" stroke="#7d0f1c" stroke-width="3"/>
<text x="593.5" y="149.1" font-size="11.2" fill="#8b0c1c" font-weight="bold" textLength="139" lengthAdjust="spacingAndGlyphs" stroke="#8b0c1c" stroke-width="0.35" letter-spacing="0.6">©tutorialgateway.org</text>
</svg></body></html>
